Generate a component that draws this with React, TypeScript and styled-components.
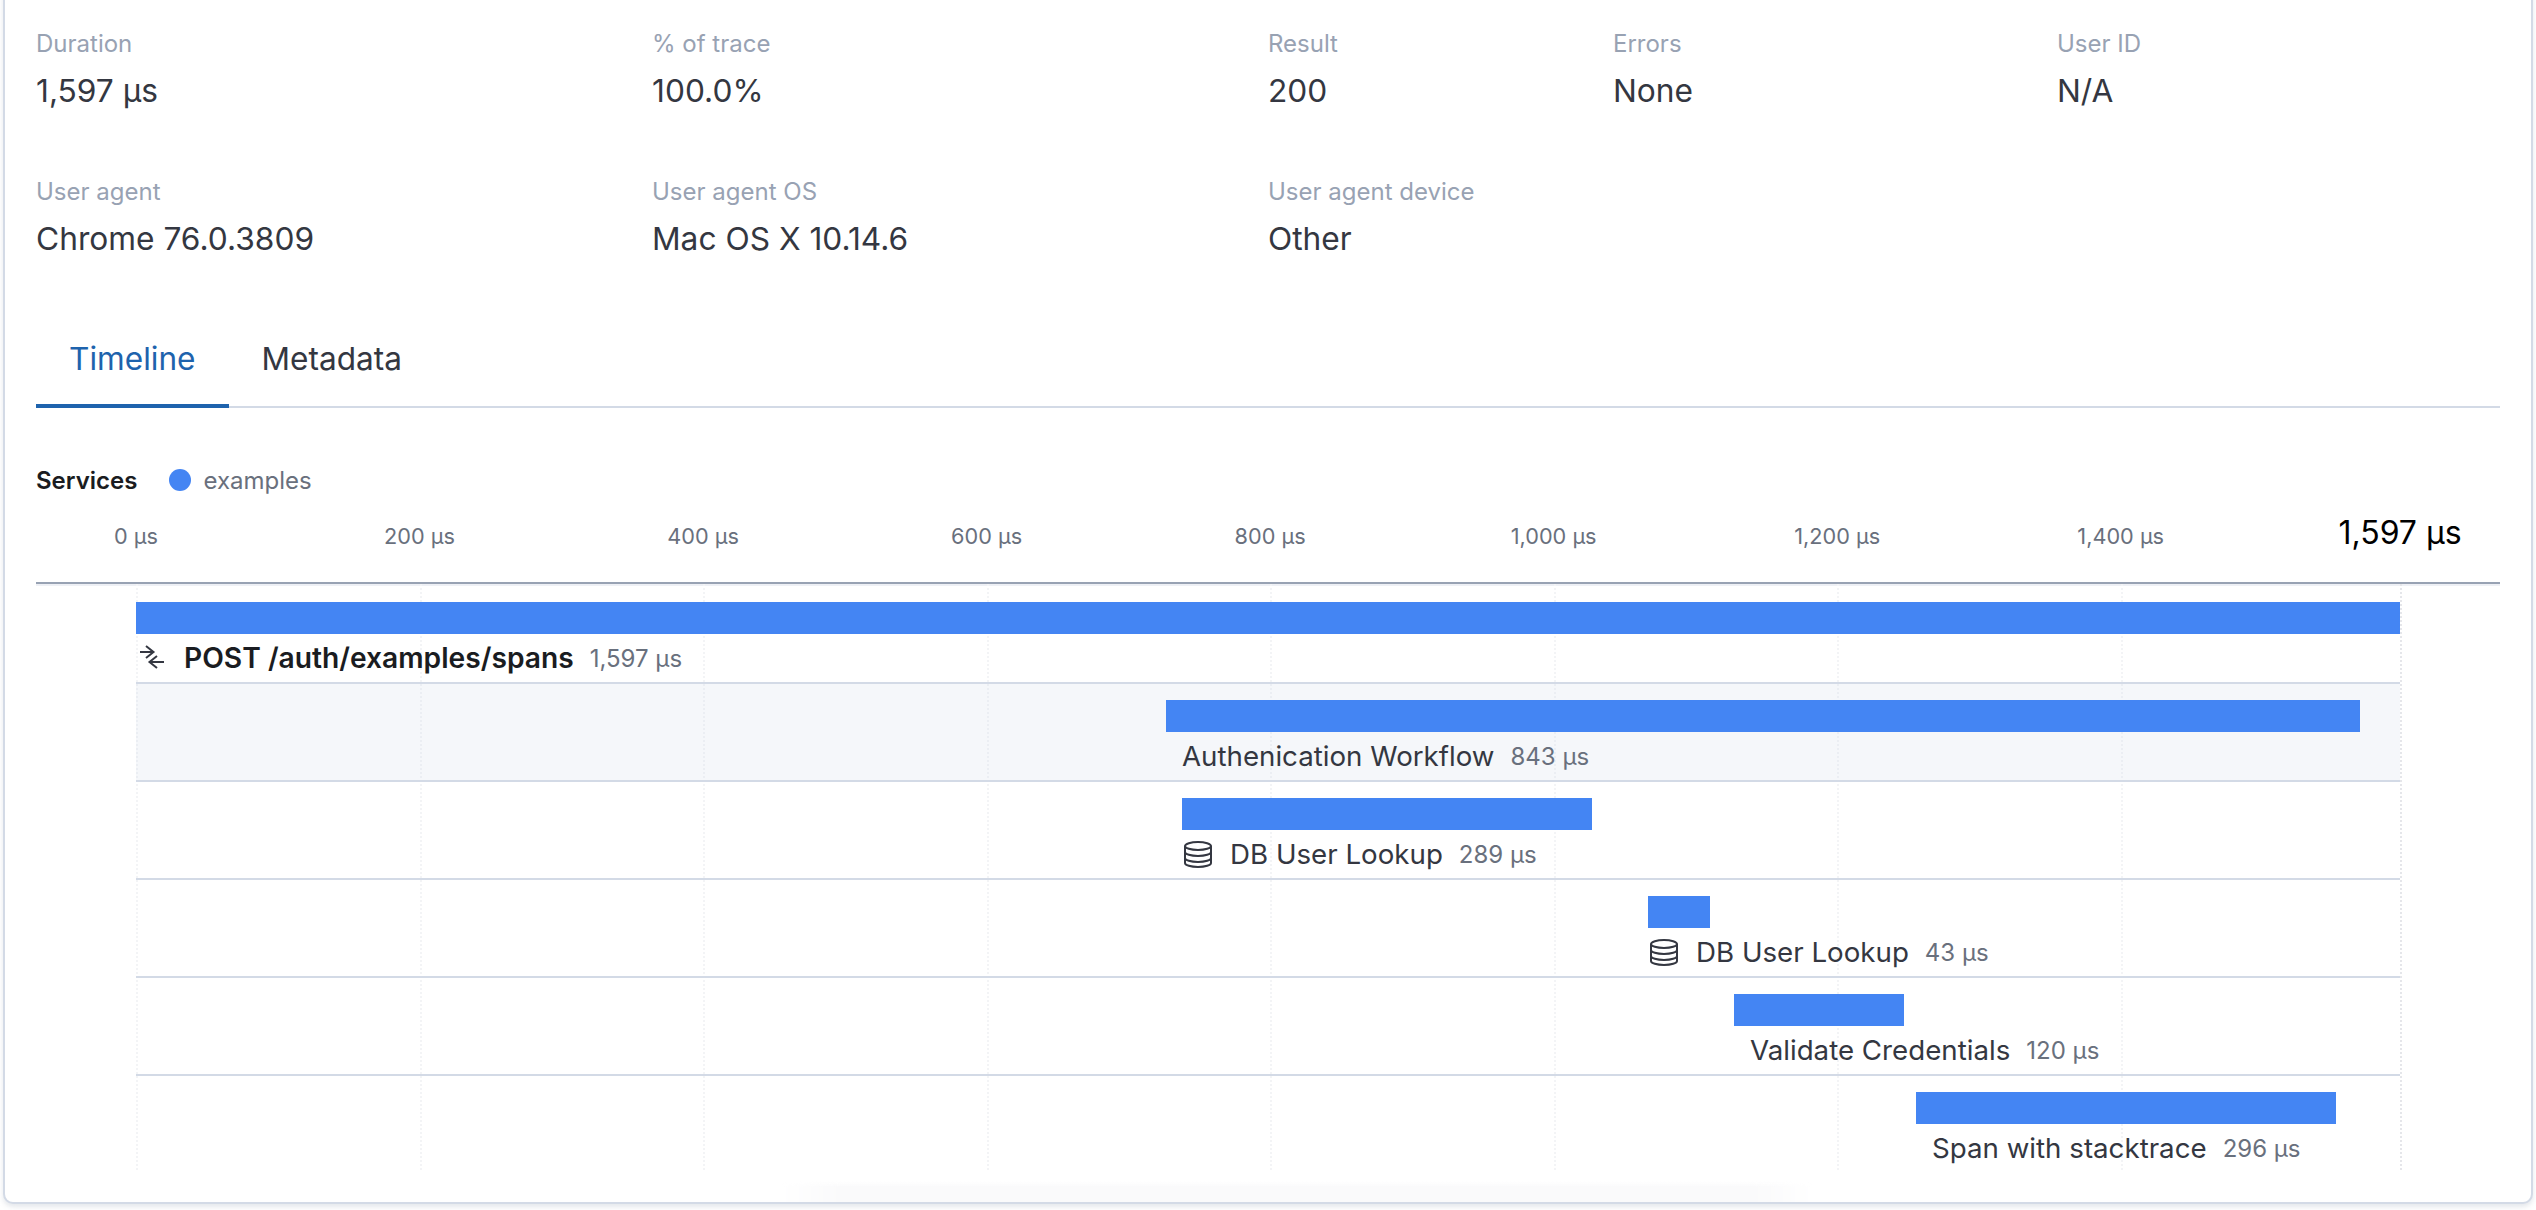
import React from "react";
import styled, { createGlobalStyle } from "styled-components";

const Global = createGlobalStyle`
  html, body { margin: 0; padding: 0; height: 1210px; overflow: hidden; background: #fff; }
  body { font-family: Inter, "Noto Sans", sans-serif; color: #343741; -webkit-font-smoothing: antialiased; }
  #root { height: 1210px; overflow: hidden; }
`;

const Panel = styled.div`
  position: relative;
  box-sizing: border-box;
  height: 1214px;
  margin: -10px 3px 0 3px;
  padding: 10px 31px 0 31px;
  background: #fff;
  border: 2px solid #d3dae6;
  border-top: 0;
  border-radius: 0 0 10px 10px;
  box-shadow: 0 3px 5px rgba(152, 162, 179, 0.25);
  &::after {
    content: "";
    position: absolute;
    left: 775px;
    right: 717px;
    bottom: 0;
    height: 21px;
    background: linear-gradient(to bottom, rgba(250, 250, 251, 0), #fafafb 30%);
    mask-image: linear-gradient(to right, transparent, #000 6%, #000 94%, transparent);
    pointer-events: none;
  }
`;

const Stats = styled.div`
  display: grid;
  grid-template-columns: 616px 616px 345px 444px 1fr;
  grid-template-rows: 148px 146px;
  padding-top: 29px;
`;

const Stat = styled.div`
  display: flex;
  flex-direction: column;
`;

const StatLabel = styled.div`
  font-size: 24px;
  line-height: 30px;
  color: #98a2b3;
`;

const StatValue = styled.div`
  margin-top: 13px;
  font-size: 31.700px;
  line-height: 38px;
  color: #343741;
`;

const TabBar = styled.div`
  display: flex;
  height: 85px;
  border-bottom: 2px solid #d3dae6;
  box-sizing: border-box;
`;

const Tab = styled.div<{ $active?: boolean }>`
  display: flex;
  align-items: center;
  padding: 0 33px 11px;
  margin-bottom: -2px;
  height: 85px;
  box-sizing: border-box;
  font-size: 31.600px;
  color: ${(p) => (p.$active ? "#1e63ad" : "#343741")};
  border-bottom: 4px solid ${(p) => (p.$active ? "#1e63ad" : "transparent")};
`;

const Legend = styled.div`
  display: flex;
  align-items: center;
  height: 30px;
  margin-top: 57px;
`;

const LegendTitle = styled.span`
  font-size: 24px;
  font-weight: 600;
  color: #1a1c21;
  margin-right: 32px;
`;

const Dot = styled.span`
  width: 22px;
  height: 22px;
  border-radius: 50%;
  background: #4485f3;
  margin-right: 12px;
`;

const LegendName = styled.span`
  font-size: 24px;
  color: #69707d;
`;

const Axis = styled.div`
  position: relative;
  height: 89px;
  box-sizing: border-box;
  border-bottom: 2px solid #98a2b3;
  box-shadow: 0 2px 0 #eef0f5;
`;

const Tick = styled.span`
  position: absolute;
  top: 26px;
  transform: translateX(-50%);
  font-size: 21.700px;
  line-height: 30px;
  color: #69707d;
  white-space: nowrap;
`;

const TotalTick = styled(Tick)`
  top: 19px;
  font-size: 32px;
  line-height: 38px;
  color: #000;
`;

const Chart = styled.div`
  position: relative;
  margin-left: 100px;
  width: 2264px;
  height: 586px;
`;

const GridLine = styled.div`
  position: absolute;
  top: 0;
  bottom: 0;
  width: 0;
  border-left: 2px dotted #f3f4f6;
`;

const EndLine = styled(GridLine)`
  border-left-color: #e5e6ea;
`;

const Rows = styled.div`
  position: relative;
  display: flex;
  flex-direction: column;
  padding-top: 2px;
`;

const Row = styled.div<{ $highlight?: boolean; $last?: boolean }>`
  box-sizing: border-box;
  height: 98px;
  padding-top: 16px;
  background: ${(p) => (p.$highlight ? "rgba(211, 218, 230, 0.22)" : "transparent")};
  border-bottom: ${(p) => (p.$last ? "0" : "2px solid #d3dae6")};
`;

const Bar = styled.div`
  height: 32px;
  background: #4485f3;
`;

const SpanLabel = styled.div<{ $pad?: boolean }>`
  display: flex;
  align-items: center;
  height: 48px;
  padding-left: ${(p) => (p.$pad ? "16px" : "0")};
  white-space: nowrap;
`;

const SpanIcon = styled.svg`
  flex: none;
  width: 32px;
  height: 32px;
  margin-right: 16px;
  fill: none;
  stroke: #343741;
  stroke-width: 2;
`;

const SpanName = styled.span<{ $bold?: boolean }>`
  font-size: ${(p) => (p.$bold ? "28.200px" : "27.700px")};
  font-weight: ${(p) => (p.$bold ? 600 : 400)};
  color: ${(p) => (p.$bold ? "#1a1c21" : "#343741")};
  margin-right: 16px;
`;

const SpanDuration = styled.span`
  font-size: 24px;
  color: #69707d;
`;

const ArrowsIcon = () => (
  <SpanIcon viewBox="0 0 32 32">
    <path d="M4 10h14M10 4l7.500 6L10 16" />
    <path d="M28 20H14M21 14l-7.500 6 7.500 6" />
  </SpanIcon>
);

const DbIcon = () => (
  <SpanIcon viewBox="0 0 32 32">
    <ellipse cx="16" cy="8" rx="13" ry="4" />
    <path d="M3 8v17c0 2.200 5.800 4 13 4s13-1.800 13-4V8" />
    <path d="M3 14c0 2.200 5.800 4 13 4s13-1.800 13-4" />
    <path d="M3 20c0 2.200 5.800 4 13 4s13-1.800 13-4" />
  </SpanIcon>
);

const stats = [
  { label: "Duration", value: "1,597 µs" },
  { label: "% of trace", value: "100.0%" },
  { label: "Result", value: "200" },
  { label: "Errors", value: "None" },
  { label: "User ID", value: "N/A" },
  { label: "User agent", value: "Chrome 76.0.3809" },
  { label: "User agent OS", value: "Mac OS X 10.14.6" },
  { label: "User agent device", value: "Other" },
];

const CHART_LEFT = 100;
const CHART_WIDTH = 2264;
const TOTAL = 1597;
const ticks = [0, 200, 400, 600, 800, 1000, 1200, 1400];
const tickX = (us: number) => (us / TOTAL) * CHART_WIDTH;

const spans: {
  name: string;
  duration: string;
  left: number;
  width: number;
  icon?: "arrows" | "db";
  bold?: boolean;
  highlight?: boolean;
}[] = [
  { name: "POST /auth/examples/spans", duration: "1,597 µs", left: 0, width: 2264, icon: "arrows", bold: true },
  { name: "Authenication Workflow", duration: "843 µs", left: 1030, width: 1194, highlight: true },
  { name: "DB User Lookup", duration: "289 µs", left: 1046, width: 410, icon: "db" },
  { name: "DB User Lookup", duration: "43 µs", left: 1512, width: 62, icon: "db" },
  { name: "Validate Credentials", duration: "120 µs", left: 1598, width: 170 },
  { name: "Span with stacktrace", duration: "296 µs", left: 1780, width: 420 },
];

export default function App() {
  return (
    <>
      <Global />
      <Panel>
        <Stats>
          {stats.map((s) => (
            <Stat key={s.label}>
              <StatLabel>{s.label}</StatLabel>
              <StatValue>{s.value}</StatValue>
            </Stat>
          ))}
        </Stats>
        <TabBar>
          <Tab $active>Timeline</Tab>
          <Tab>Metadata</Tab>
        </TabBar>
        <Legend>
          <LegendTitle>Services</LegendTitle>
          <Dot />
          <LegendName>examples</LegendName>
        </Legend>
        <Axis>
          {ticks.map((t) => (
            <Tick key={t} style={{ left: CHART_LEFT + tickX(t) }}>
              {t.toLocaleString("en-US")} µs
            </Tick>
          ))}
          <TotalTick style={{ left: CHART_LEFT + CHART_WIDTH }}>1,597 µs</TotalTick>
        </Axis>
        <Chart>
          {ticks.map((t) => (
            <GridLine key={t} style={{ left: tickX(t) }} />
          ))}
          <EndLine style={{ left: CHART_WIDTH }} />
          <Rows>
            {spans.map((s, i) => (
              <Row key={i} $highlight={s.highlight} $last={i === spans.length - 1}>
                <Bar style={{ marginLeft: s.left, width: s.width }} />
                <SpanLabel $pad={!s.icon} style={{ marginLeft: s.left }}>
                  {s.icon === "arrows" && <ArrowsIcon />}
                  {s.icon === "db" && <DbIcon />}
                  <SpanName $bold={s.bold}>{s.name}</SpanName>
                  <SpanDuration>{s.duration}</SpanDuration>
                </SpanLabel>
              </Row>
            ))}
          </Rows>
        </Chart>
      </Panel>
    </>
  );
}
